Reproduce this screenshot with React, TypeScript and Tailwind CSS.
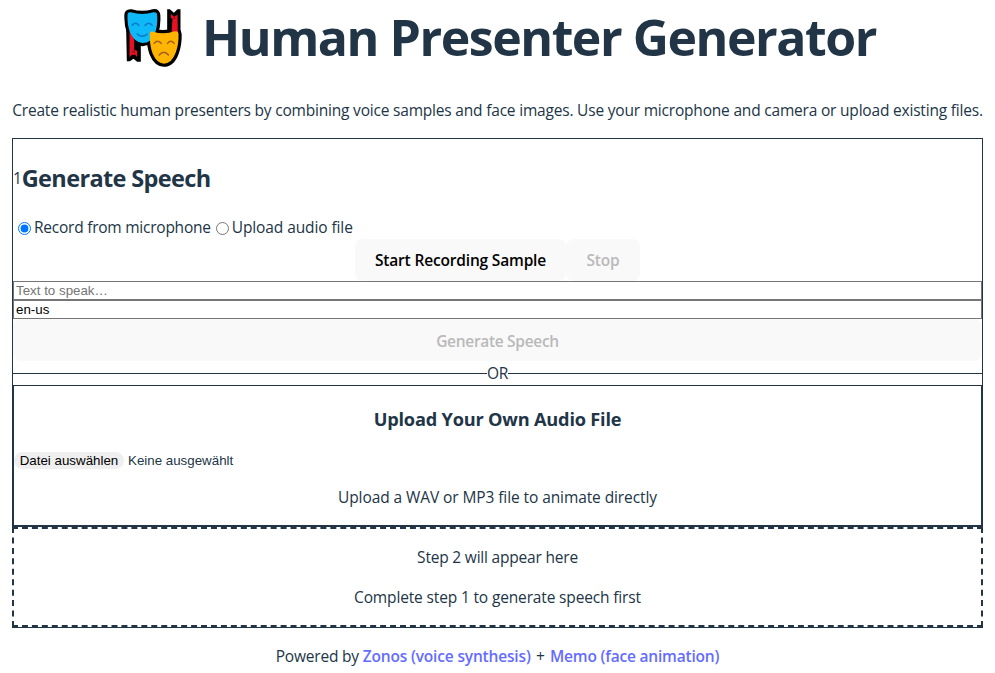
import React from "react";

function MasksIcon() {
  const blue =
    "M54 47 Q53 36 64 37 Q98 47 132 37 Q143 35 143 47 Q145 74 137 98 Q125 129 99 129 Q75 127 62 98 Q53 74 54 47Z";
  const yellow =
    "M121 104 Q120 93 131 95 Q163 105 196 94 Q207 92 207 103 Q208 132 199 157 Q187 191 163 191 Q141 190 129 160 Q120 134 121 104Z";
  return (
    <svg
      className="mr-[1.5px] -ml-[1.5px] h-[58px] w-[83px] shrink-0"
      viewBox="22.5 27 249 174"
      role="img"
      aria-label="Theater masks"
    >
      <g fill="#000">
        <path d={blue} stroke="#000" strokeWidth="19" strokeLinejoin="round" />
        <path d={yellow} stroke="#000" strokeWidth="19" strokeLinejoin="round" />
        <path d="M50 85 L52 184 L61 184 L72 176 L83 185 L94 185 L94 120Z" />
        <path d="M173 95 L173 28 L181 28 L193 38 L204 28 L213 28 L213 100Z" />
      </g>
      <path
        d="M60 92 L74 118 L74 149 L83 152 L83 172 L77 164 L67 164 L60 172Z"
        fill="#e81123"
      />
      <path
        d="M189 57 L184 53 L184 42 L194 50 L204 44 L205 96 L186 98Z"
        fill="#e81123"
      />
      <path d="M66 157 L72 150 L76 150 L77 160Z" fill="#a4101c" />
      <path d="M189 57 L194 50 L200 57Z" fill="#a4101c" />
      <path d={blue} fill="#0fb9f8" />
      <path d={yellow} fill="#ffb500" />
      <g fill="none" strokeWidth="4.5" strokeLinecap="round">
        <g stroke="#0b79cc">
          <path d="M68 76 Q78 64 88 76" />
          <path d="M107 76 Q118 64 128 76" />
          <path d="M83 102 Q98 116 113 102" />
        </g>
        <g stroke="#a35f24">
          <path d="M134 130 Q144 117 155 130" />
          <path d="M174 130 Q184 117 194 130" />
          <path d="M149 165 Q163 148 177 165" />
        </g>
      </g>
    </svg>
  );
}

function Radio({ checked }: { checked?: boolean }) {
  return (
    <input
      type="radio"
      name="source"
      defaultChecked={checked}
      className="mt-[7px] ml-[5px] h-[13px] w-[13px] shrink-0"
    />
  );
}

export default function App() {
  return (
    <div className="h-[673px] overflow-hidden bg-white px-3 pt-[9px] font-['Open_Sans',sans-serif] text-[15.5px] leading-6 tracking-[-0.2px] text-[#213547]">
      <h1 className="flex h-14 justify-center text-[50px] leading-[56px] font-bold tracking-[-1.46px] whitespace-nowrap">
        <MasksIcon />
        <span>Human Presenter Generator</span>
      </h1>
      <p className="mt-[33px] text-center tracking-[-0.197px] whitespace-nowrap">
        Create realistic human presenters by combining voice samples and face images. Use your
        microphone and camera or upload existing files.
      </p>

      <main className="mt-4 border-b border-[#213547]">
        <section className="border border-[#213547]">
          <div className="mt-[21px] flex h-9 items-center">
            <span>1</span>
            <h2 className="text-[23.5px] leading-9 font-bold tracking-[-0.63px]">
              Generate Speech
            </h2>
          </div>

          <div className="mt-[19px] flex h-6">
            <label className="flex">
              <Radio checked />
              <span className="ml-[3px] tracking-[-0.24px]">Record from microphone</span>
            </label>
            <label className="flex">
              <Radio />
              <span className="ml-[3px] tracking-[-0.1px]">Upload audio file</span>
            </label>
          </div>

          <div className="flex h-[42px] justify-center">
            <button className="w-[211px] rounded-lg bg-[#f9f9f9] font-semibold tracking-[-0.17px] text-black">
              Start Recording Sample
            </button>
            <button
              disabled
              className="w-[74px] rounded-lg bg-[#f9f9f9] font-semibold text-[#b9b9b9]"
            >
              Stop
            </button>
          </div>

          <input
            placeholder="Text to speak…"
            className="block h-[19px] w-full border border-[#767676] px-0.5 font-['Liberation_Sans',sans-serif] text-[13.333px] leading-[17px] tracking-normal placeholder:text-[#757575]"
          />
          <input
            defaultValue="en-us"
            className="block h-[19px] w-full border border-[#767676] px-0.5 font-['Liberation_Sans',sans-serif] text-[13.333px] leading-[17px] tracking-normal text-black"
          />
          <button
            disabled
            className="block h-[42px] w-full rounded-lg bg-[#f9f9f9] pt-0.5 font-semibold tracking-[-0.31px] text-[#b9b9b9]"
          >
            Generate Speech
          </button>

          <div className="flex h-6 items-center">
            <span className="h-px flex-1 bg-[#213547]" />
            <span>OR</span>
            <span className="h-px flex-1 bg-[#213547]" />
          </div>

          <div className="h-[141px] border border-[#213547] pt-[19px]">
            <h3 className="text-center text-[18.2px] leading-7 font-bold tracking-[-0.2px]">
              Upload Your Own Audio File
            </h3>
            <div className="mt-[19px] flex h-[17px] items-center font-['Liberation_Sans',sans-serif] text-[13.333px] leading-[17px] tracking-normal">
              <button className="h-[17px] w-[110px] rounded-full bg-[#efefef] text-black">
                Datei auswählen
              </button>
              <span className="ml-1">Keine ausgewählt</span>
            </div>
            <p className="mt-4 text-center tracking-[-0.09px]">
              Upload a WAV or MP3 file to animate directly
            </p>
          </div>
        </section>

        <section className="border-2 border-dashed border-[#213547] py-4 text-center">
          <p>Step 2 will appear here</p>
          <p className="mt-4 tracking-[-0.15px]">Complete step 1 to generate speech first</p>
        </section>
      </main>

      <footer className="mt-4 text-center">
        Powered by{" "}
        <a className="font-semibold tracking-[-0.17px] text-[#646cff]">Zonos (voice synthesis)</a>
        <span className="mx-[1.5px]"> + </span>
        <a className="font-semibold tracking-[-0.19px] text-[#646cff]">Memo (face animation)</a>
      </footer>
    </div>
  );
}
